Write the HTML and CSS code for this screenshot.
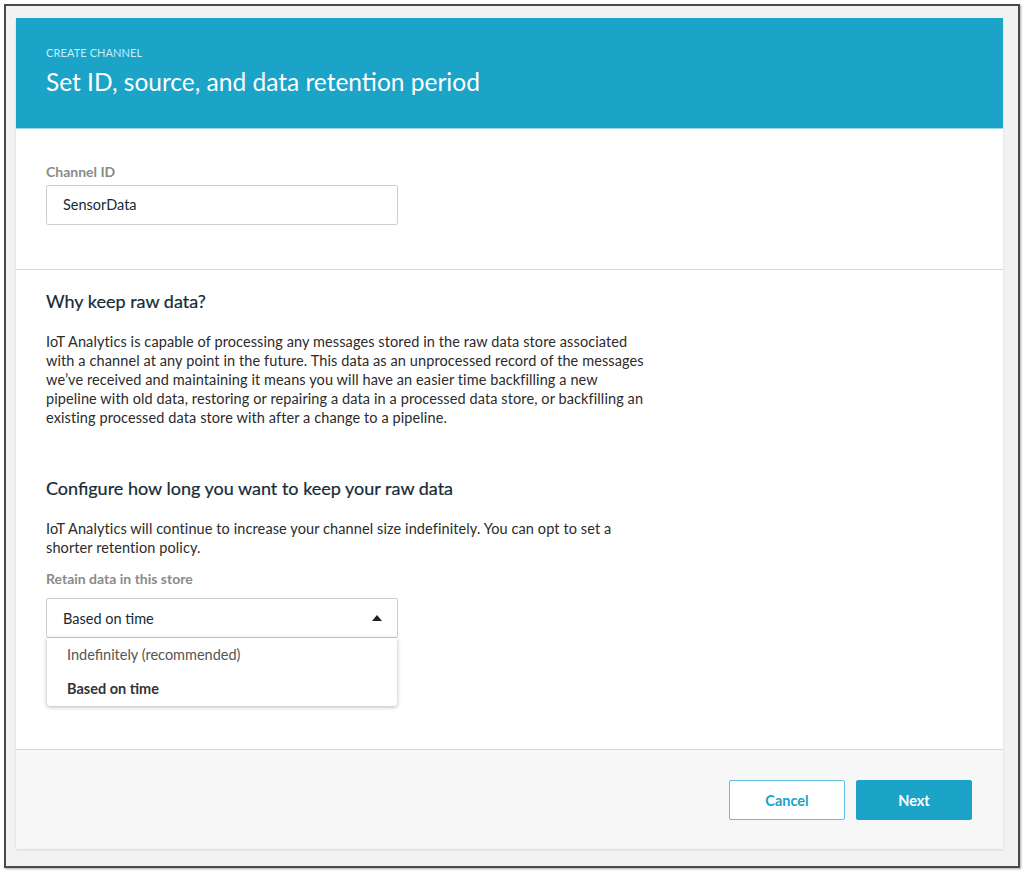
FILE: index.html
```html
<!DOCTYPE html>
<html>
<head>
<meta charset="utf-8">
<link rel="stylesheet" href="styles.css">
</head>
<body>
<div class="frame">
  <div class="card">
    <div class="header">
      <div class="eyebrow">CREATE CHANNEL</div>
      <h1 class="title">Set ID, source, and data retention period</h1>
    </div>
    <div class="section section-id">
      <label class="label">Channel ID</label>
      <div class="input">SensorData</div>
    </div>
    <div class="section section-raw">
      <h2 class="heading">Why keep raw data?</h2>
      <p class="para">IoT Analytics is capable of processing any messages stored in the raw data store associated<br>with a channel at any point in the future. This data as an unprocessed record of the messages<br>we’ve received and maintaining it means you will have an easier time backfilling a new<br>pipeline with old data, restoring or repairing a data in a processed data store, or backfilling an<br>existing processed data store with after a change to a pipeline.</p>
      <h2 class="heading heading-2">Configure how long you want to keep your raw data</h2>
      <p class="para">IoT Analytics will continue to increase your channel size indefinitely. You can opt to set a<br>shorter retention policy.</p>
      <label class="label label-2">Retain data in this store</label>
      <div class="select-wrap">
        <div class="select">
          <span>Based on time</span>
          <svg class="caret" width="10" height="6" viewBox="0 0 10 6"><path d="M0 6 L5 0 L10 6 Z" fill="#222"/></svg>
        </div>
        <div class="menu">
          <div class="option">Indefinitely (recommended)</div>
          <div class="option option-selected">Based on time</div>
        </div>
      </div>
    </div>
    <div class="footer">
      <button class="btn btn-cancel">Cancel</button>
      <button class="btn btn-next">Next</button>
    </div>
  </div>
</div>
</body>
</html>
```
FILE: styles.css
```css
* { box-sizing: border-box; }
html, body { margin: 0; padding: 0; background: #ffffff; }
body { font-family: Lato, "Open Sans", sans-serif; color: #333; }

.frame {
  margin: 4px;
  width: 1016px;
  height: 864px;
  border: 2px solid #4a4a4a;
  background: #f2f2f2;
  box-shadow: 1px 1px 2px rgba(0,0,0,0.35);
  padding: 12px 0 0 10px;
}
.card {
  width: 987px;
  background: #fff;
  box-shadow: 0 1px 2px rgba(0,0,0,0.12);
}
.header {
  background: #1ba3c8;
  height: 111px;
  padding: 28px 30px 0;
  border-bottom: 1px solid #9cd6e6;
}
.eyebrow {
  font-size: 11px;
  color: #c4eef9;
  line-height: 13px;
  letter-spacing: 0.1px;
}
.title {
  margin: 8px 0 0;
  font-weight: 400;
  font-size: 24.5px;
  color: #fff;
  line-height: 30px;
}
.section { padding: 0 30px; }
.section-id {
  padding-top: 34px;
  height: 141px;
  border-bottom: 1px solid #d5d5d5;
}
.label {
  display: block;
  font-size: 14px;
  font-weight: 700;
  color: #8a8a8a;
  line-height: 17px;
}
.input {
  margin-top: 5px;
  width: 352px;
  height: 40px;
  border: 1px solid #cfcfcf;
  border-radius: 2px;
  padding: 0 16px;
  font-size: 14.5px;
  line-height: 38px;
  color: #152b36;
}
.section-raw {
  padding-top: 20px;
  height: 480px;
  border-bottom: 1px solid #d5d5d5;
}
.heading {
  margin: 0;
  font-size: 18px;
  font-weight: 400;
  color: #152b36;
  line-height: 22px;
  -webkit-text-stroke: 0.2px #152b36;
}
.heading-2 { margin-top: 50px; }
.para {
  margin: 20px 0 0;
  font-size: 14.5px;
  letter-spacing: 0.1px;
  line-height: 19px;
  color: #2b2b2b;
}
.label-2 { margin-top: 13px; }
.select-wrap { margin-top: 11px; width: 352px; position: relative; }
.select {
  height: 40px;
  border: 1px solid #cfcfcf;
  border-radius: 2px;
  padding: 0 15px 0 16px;
  display: flex;
  align-items: center;
  justify-content: space-between;
  font-size: 14.5px;
  color: #152b36;
}
.caret { display: block; }
.menu {
  margin: 0 1px;
  background: #fff;
  border-radius: 0 0 3px 3px;
  box-shadow: 0 1px 4px rgba(0,0,0,0.3);
  padding: 0;
}
.option {
  padding: 0 20px;
  font-size: 14.5px;
  line-height: 34px;
  color: #555;
}
.option-selected { font-weight: 700; color: #333; }
.footer {
  background: #f7f7f7;
  height: 99px;
  display: flex;
  justify-content: flex-end;
  align-items: flex-start;
  padding: 30px 31px 0 0;
  gap: 11px;
}
.btn {
  width: 116px;
  height: 40px;
  border-radius: 2px;
  font-family: Lato, "Open Sans", sans-serif;
  font-size: 14.5px;
  font-weight: 700;
  cursor: pointer;
}
.btn-cancel {
  background: #fff;
  border: 1px solid #5fbfdc;
  color: #1ba3c8;
}
.btn-next {
  background: #1ba3c8;
  border: 1px solid #1ba3c8;
  color: #fff;
}
```
